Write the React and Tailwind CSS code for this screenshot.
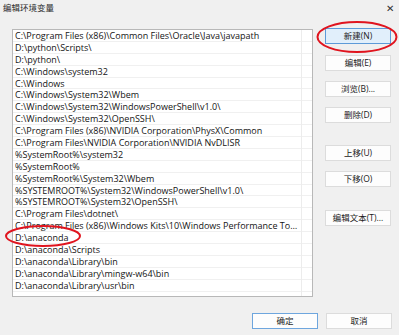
import React from "react";

const rows = [
  "C:\\Program Files (x86)\\Common Files\\Oracle\\Java\\javapath",
  "D:\\python\\Scripts\\",
  "D:\\python\\",
  "C:\\Windows\\system32",
  "C:\\Windows",
  "C:\\Windows\\System32\\Wbem",
  "C:\\Windows\\System32\\WindowsPowerShell\\v1.0\\",
  "C:\\Windows\\System32\\OpenSSH\\",
  "C:\\Program Files (x86)\\NVIDIA Corporation\\PhysX\\Common",
  "C:\\Program Files\\NVIDIA Corporation\\NVIDIA NvDLISR",
  "%SystemRoot%\\system32",
  "%SystemRoot%",
  "%SystemRoot%\\System32\\Wbem",
  "%SYSTEMROOT%\\System32\\WindowsPowerShell\\v1.0\\",
  "%SYSTEMROOT%\\System32\\OpenSSH\\",
  "C:\\Program Files\\dotnet\\",
  "C:\\Program Files (x86)\\Windows Kits\\10\\Windows Performance Toolkit\\",
  "D:\\anaconda",
  "D:\\anaconda\\Scripts",
  "D:\\anaconda\\Library\\bin",
  "D:\\anaconda\\Library\\mingw-w64\\bin",
  "D:\\anaconda\\Library\\usr\\bin",
];

function Btn({ children, className = "" }) {
  return (
    <div
      className={
        "flex h-[16px] w-[66px] items-center justify-center border text-[8.5px] leading-[12px] text-[#1a1a1a] " +
        className
      }
    >
      {children}
    </div>
  );
}

export default function App() {
  return (
    <div
      className="relative h-[335px] w-[399px] overflow-hidden bg-[#f0f0f0]"
      style={{ fontFamily: '"Open Sans", "Noto Sans CJK SC", sans-serif' }}
    >
      {/* title bar */}
      <div className="flex h-[15px] items-center justify-between pl-[3px] pr-[5px]">
        <span className="text-[8.5px] leading-[12px] text-[#2a2a2a]">编辑环境变量</span>
        <span className="text-[10px] leading-[12px] text-[#333]">✕</span>
      </div>

      <div className="flex pl-[12px] pt-[14px]">
        {/* list */}
        <div className="relative h-[268px] w-[301px] border border-[#b8b8b8] bg-white">
          <div className="absolute bottom-0 left-[288px] top-0 w-px bg-[#ececec]" />
          {rows.map((r, i) => (
            <div
              key={i}
              className="flex h-[11.9px] items-center border-b border-[#f0f0f0] pl-[2px]"
            >
              <span className="w-[284px] truncate text-[9px] leading-[11px] text-[#141414]">
                {r}
              </span>
            </div>
          ))}
        </div>

        {/* buttons */}
        <div className="ml-[12px] flex flex-col">
          <Btn className="-mt-[1px] border-[#5d9ad8] bg-[#e1effb]">新建(N)</Btn>
          <Btn className="mt-[11px] border-[#dcdcdc] bg-[#fdfdfd]">编辑(E)</Btn>
          <Btn className="mt-[10px] border-[#dcdcdc] bg-[#fdfdfd]">浏览(B)...</Btn>
          <Btn className="mt-[10px] border-[#dcdcdc] bg-[#fdfdfd]">删除(D)</Btn>
          <Btn className="mt-[22px] border-[#dcdcdc] bg-[#fdfdfd]">上移(U)</Btn>
          <Btn className="mt-[10px] border-[#dcdcdc] bg-[#fdfdfd]">下移(O)</Btn>
          <Btn className="mt-[23px] border-[#dcdcdc] bg-[#fdfdfd]">编辑文本(T)...</Btn>
        </div>
      </div>

      {/* bottom buttons */}
      <div className="flex justify-end gap-[8px] pr-[7px] pt-[16px]">
        <Btn className="border-[#6ea6de] bg-[#fdfdfd]">确定</Btn>
        <Btn className="border-[#dcdcdc] bg-[#fdfdfd]">取消</Btn>
      </div>

      {/* red annotations */}
      <svg className="pointer-events-none absolute left-0 top-0" width="399" height="335">
        <ellipse cx="357" cy="37" rx="39.5" ry="15" fill="none" stroke="#e0141e" strokeWidth="2" />
        <ellipse cx="43" cy="236" rx="37" ry="10" fill="none" stroke="#e0141e" strokeWidth="2" />
      </svg>
    </div>
  );
}
